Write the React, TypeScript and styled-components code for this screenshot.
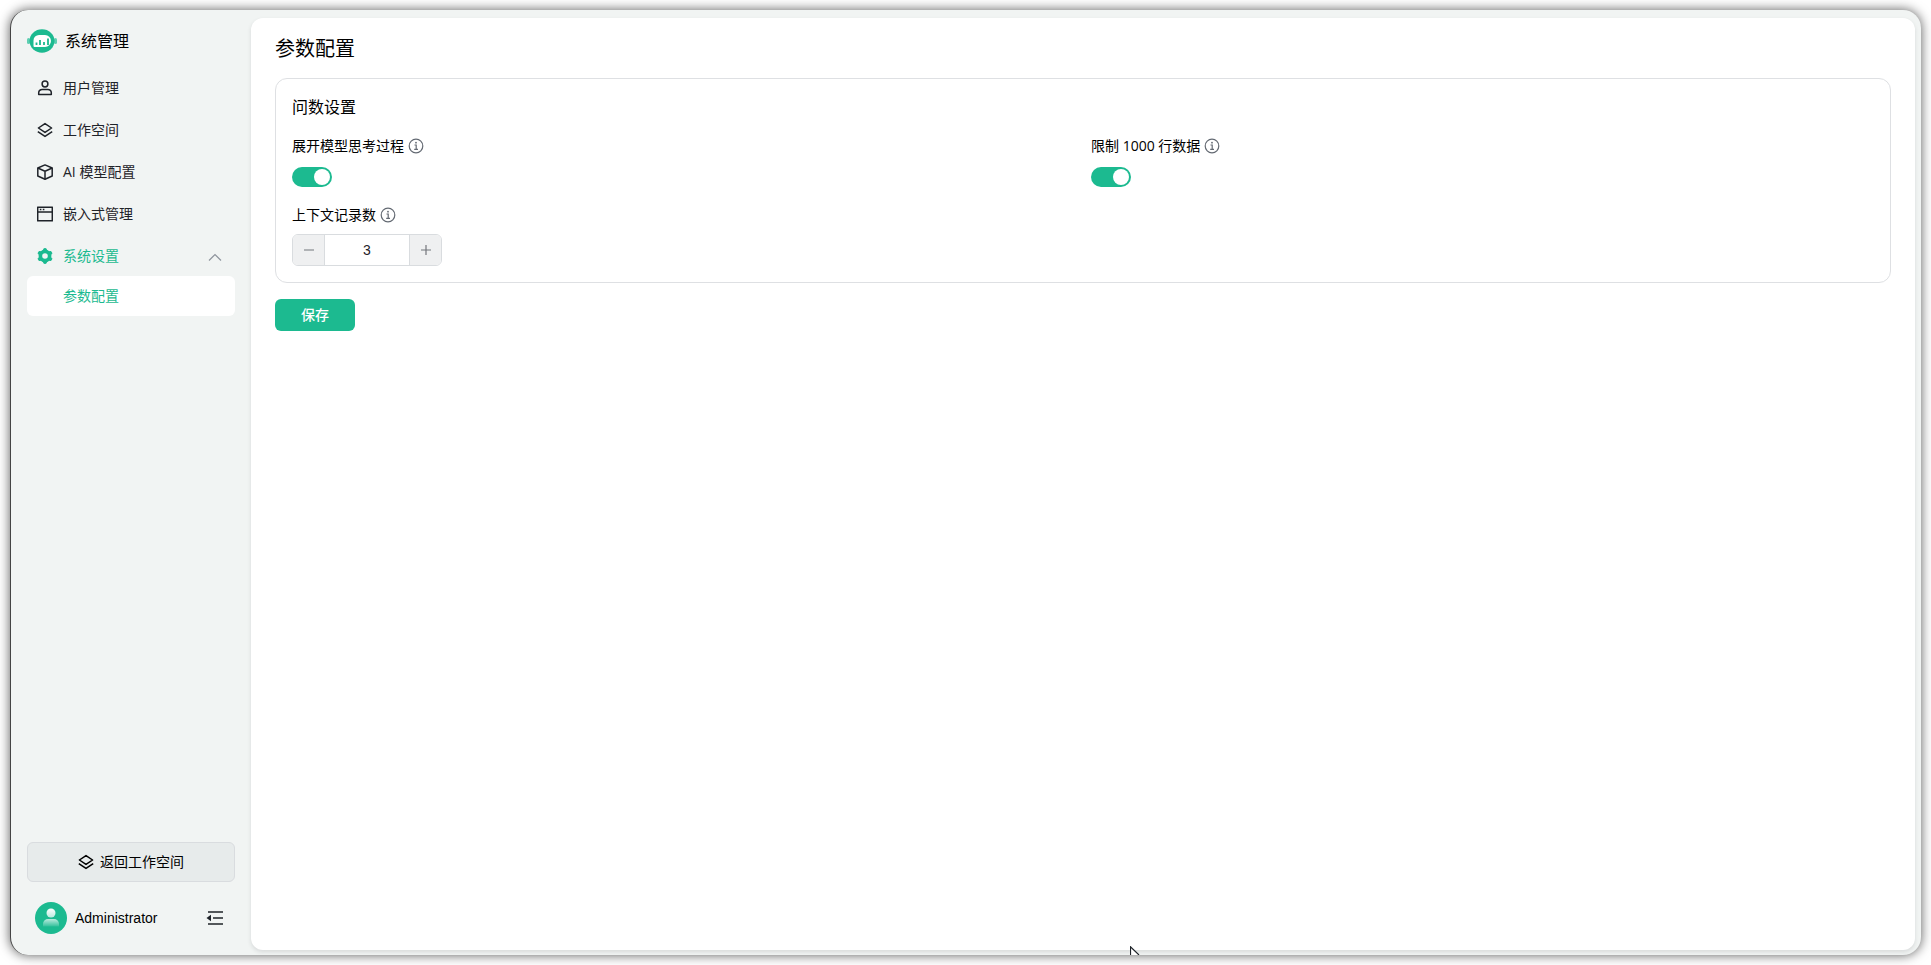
import React, { useState } from "react";
import styled, { createGlobalStyle } from "styled-components";

const green = "#1cba90";
const ink = "#1f2329";
const sans = '"Liberation Sans", "Noto Sans CJK SC", sans-serif';
const mixed = '"Open Sans", "Noto Sans CJK SC", sans-serif';

const GlobalStyle = createGlobalStyle`
  * { box-sizing: border-box; }
  body { margin: 0; background: #fff; font-family: ${mixed}; font-size: 14px; line-height: 22px; color: #000; }
  button, input { font: inherit; color: inherit; }
  h1, h2, ul { margin: 0; padding: 0; font-weight: 400; list-style: none; }
  svg { display: block; flex: none; }
`;

const Page = styled.div`
  min-height: 100vh;
  padding: 10px;
  display: flex;
`;

const Frame = styled.div`
  position: relative;
  flex: 1;
  display: flex;
  padding: 8px 6px 5px 0;
  border-left: 1px solid #444;
  border-radius: 18px;
  background: #f1f4f3;
  box-shadow: 0 0 12px rgba(0, 0, 0, 0.65);
`;

const Sidebar = styled.aside`
  width: 240px;
  flex: none;
  display: flex;
  flex-direction: column;
  padding: 8px 16px 12px;
`;

const Brand = styled.div`
  display: flex;
  align-items: center;
  gap: 8px;
  height: 30px;
  margin-bottom: 12px;
  font-size: 16px;
  line-height: 24px;
`;

const Menu = styled.ul`
  display: flex;
  flex-direction: column;
  gap: 2px;
`;

const MenuLink = styled.a<{ $active?: boolean }>`
  display: flex;
  align-items: center;
  gap: 10px;
  height: 40px;
  padding: 0 13px 0 10px;
  color: ${(p) => (p.$active ? green : ink)};
  text-decoration: none;
`;

const MenuText = styled.span`
  flex: 1;
`;

const SubLink = styled.a`
  display: flex;
  align-items: center;
  height: 40px;
  padding-left: 36px;
  border-radius: 6px;
  background: #fff;
  color: ${green};
  text-decoration: none;
`;

const SideFooter = styled.div`
  margin-top: auto;
  display: flex;
  flex-direction: column;
  gap: 16px;
`;

const BackButton = styled.button`
  display: flex;
  align-items: center;
  justify-content: center;
  gap: 6px;
  height: 40px;
  padding: 0;
  border: 1px solid #d9dcdf;
  border-radius: 6px;
  background: #e7ebeb;
`;

const UserRow = styled.div`
  display: flex;
  align-items: center;
  gap: 8px;
  height: 40px;
  padding: 0 9px 0 8px;
  font-family: ${sans};
`;

const UserName = styled.span`
  flex: 1;
`;

const IconButton = styled.button`
  display: flex;
  padding: 2px;
  border: 0;
  background: none;
  color: ${ink};
`;

const Main = styled.main`
  flex: 1;
  padding: 16px 24px;
  border-radius: 12px;
  background: #fff;
  box-shadow: 0 2px 4px rgba(31, 35, 41, 0.12);
`;

const PageTitle = styled.h1`
  font-size: 20px;
  line-height: 30px;
  margin-bottom: 14px;
`;

const Card = styled.section`
  padding: 16px;
  border: 1px solid #dee0e3;
  border-radius: 12px;
  margin-bottom: 16px;
`;

const CardTitle = styled.h2`
  font-size: 16px;
  line-height: 24px;
  margin-bottom: 16px;
`;

const Fields = styled.div`
  display: grid;
  grid-template-columns: 1fr 1fr;
  gap: 16px;
`;

const Field = styled.div`
  display: flex;
  flex-direction: column;
  align-items: flex-start;
  gap: 8px;
`;

const FieldHead = styled.div`
  display: flex;
  align-items: center;
  gap: 4px;
  height: 22px;
`;

const SwitchInput = styled.input`
  appearance: none;
  display: flex;
  align-items: center;
  width: 40px;
  height: 20px;
  margin: 2px 0 1px;
  padding: 0 2px;
  border-radius: 10px;
  background: #bbbfc4;
  &::before {
    content: "";
    width: 16px;
    height: 16px;
    border-radius: 50%;
    background: #fff;
  }
  &:checked {
    background: ${green};
    justify-content: flex-end;
  }
`;

const Stepper = styled.div`
  display: flex;
  width: 150px;
  height: 32px;
  border: 1px solid #d9dcdf;
  border-radius: 6px;
  overflow: hidden;
`;

const StepButton = styled.button`
  display: flex;
  align-items: center;
  justify-content: center;
  width: 31px;
  padding: 0;
  border: 0;
  background: #eff0f1;
  color: #73767c;
`;

const StepInput = styled.input`
  flex: 1;
  min-width: 0;
  padding: 0;
  border: solid #d9dcdf;
  border-width: 0 1px;
  background: #fff;
  color: ${ink};
  font-family: ${sans};
  text-align: center;
  outline: 0;
`;

const SaveButton = styled.button`
  width: 80px;
  height: 32px;
  padding: 0;
  border: 0;
  border-radius: 6px;
  background: ${green};
  color: #fff;
  font-weight: 500;
`;

const Pointer = styled.svg`
  position: absolute;
  left: 1119px;
  bottom: 0;
`;

const Logo = () => (
  <svg width="30" height="24" viewBox="0 0 30 24">
    <rect x="0" y="9" width="3" height="6" rx="1.5" fill="#5fcfb2" />
    <rect x="27" y="9" width="3" height="6" rx="1.5" fill="#5fcfb2" />
    <ellipse cx="15" cy="12" rx="12.5" ry="11.7" fill={green} />
    <path d="M12 6h6a6 6 0 0 1 0 12H7.500a1 1 0 0 1-1-1v-5.500A5.500 5.500 0 0 1 12 6z" fill="#fff" />
    <path d="M9.500 13.500V16M13 11V16M17 13V16M21 9.500V16" stroke={green} strokeWidth="1.800" />
  </svg>
);

const line = { fill: "none", stroke: "currentColor", strokeWidth: 1.5, strokeLinejoin: "round" as const };

const UserIcon = () => (
  <svg width="16" height="16" viewBox="0 0 16 16" {...line}>
    <circle cx="8" cy="4" r="2.9" />
    <path d="M1.7 14.6v-1.8a3.4 3.4 0 0 1 3.4-3.4h5.8a3.4 3.4 0 0 1 3.4 3.4v1.8z" />
  </svg>
);

const LayersIcon = () => (
  <svg width="16" height="16" viewBox="0 0 16 16" {...line}>
    <path d="M8 1.600 14.600 6 8 10.400 1.400 6z" />
    <path d="M.8 9.600 8 14.400l7.200-4.800" />
  </svg>
);

const CubeIcon = () => (
  <svg width="16" height="16" viewBox="0 0 16 16" {...line}>
    <path d="M8 .9 15.200 4v8L8 15.200.8 12V4z" />
    <path d="M.8 4 8 7.200 15.200 4M8 7.200v8" />
  </svg>
);

const WindowIcon = () => (
  <svg width="16" height="16" viewBox="0 0 16 16" {...line}>
    <path d="M.7 1.200h14.600v13.600H.7zM.7 6h14.600" />
    <path d="M2.800 3.600h1.600M5.800 3.600h1.600" />
  </svg>
);

const GearIcon = () => (
  <svg width="16" height="16" viewBox="0 0 16 16" fill="none" stroke="currentColor">
    <circle cx="8" cy="8" r="4.600" strokeWidth="3.600" />
    {[0, 60, 120, 180, 240, 300].map((angle) => (
      <path
        key={angle}
        d="M6.300 3 6.900.7h2.200L9.700 3z"
        fill="currentColor"
        strokeWidth="1"
        strokeLinejoin="round"
        transform={`rotate(${angle} 8 8)`}
      />
    ))}
  </svg>
);

const ChevronUp = () => (
  <svg width="14" height="14" viewBox="0 0 14 14" fill="none" stroke="#8f959e" strokeWidth="1.200">
    <path d="M1 11.500 7 5.500l6 6" />
  </svg>
);

const CollapseIcon = () => (
  <svg width="18" height="16" viewBox="0 0 18 16">
    <path d="M2 2h15M7 8h10M2 14h15" stroke="currentColor" strokeWidth="1.700" />
    <path d="M.5 8 5 4.800v6.400z" fill="currentColor" />
  </svg>
);

const Avatar = () => (
  <svg width="32" height="32" viewBox="0 0 32 32">
    <defs>
      <linearGradient id="fade" x1="0" y1="0" x2="0" y2="1">
        <stop offset="0" stopColor="#fff" stopOpacity=".7" />
        <stop offset="1" stopColor="#fff" stopOpacity=".1" />
      </linearGradient>
      <linearGradient id="head" x1="0" y1="0" x2="0" y2="1">
        <stop offset="0" stopColor="#fff" />
        <stop offset="1" stopColor="#fff" stopOpacity=".7" />
      </linearGradient>
    </defs>
    <circle cx="16" cy="16" r="16" fill={green} />
    <circle cx="16" cy="11" r="4.500" fill="url(#head)" />
    <path d="M8 24.500V22a5 5 0 0 1 5-5h6a5 5 0 0 1 5 5v2.500z" fill="url(#fade)" />
  </svg>
);

const InfoIcon = () => (
  <svg width="16" height="16" viewBox="0 0 16 16" fill="none" stroke="#646a73" strokeWidth="1.200">
    <circle cx="8" cy="8" r="6.800" />
    <path d="M6.500 7h1.700v4.300M6.200 11.300h3.800" />
    <circle cx="8" cy="4.700" r=".9" fill="#646a73" stroke="none" />
  </svg>
);

const StepIcon = ({ plus }: { plus?: boolean }) => (
  <svg width="12" height="12" viewBox="0 0 12 12" fill="none" stroke="currentColor" strokeWidth="1.200">
    <path d={plus ? "M1 6h10M6 1v10" : "M1 6h10"} />
  </svg>
);

const items = [
  { text: "用户管理", icon: <UserIcon /> },
  { text: "工作空间", icon: <LayersIcon /> },
  { text: "AI 模型配置", icon: <CubeIcon /> },
  { text: "嵌入式管理", icon: <WindowIcon /> },
];

const SwitchField = ({ id, label }: { id: string; label: string }) => (
  <Field>
    <FieldHead>
      <label htmlFor={id}>{label}</label>
      <InfoIcon />
    </FieldHead>
    <SwitchInput id={id} type="checkbox" role="switch" defaultChecked />
  </Field>
);

export default function App() {
  const [count, setCount] = useState(3);
  return (
    <Page>
      <GlobalStyle />
      <Frame>
        <Sidebar>
          <Brand>
            <Logo />
            <span>系统管理</span>
          </Brand>
          <nav>
            <Menu>
              {items.map((item) => (
                <li key={item.text}>
                  <MenuLink href="#">
                    {item.icon}
                    <MenuText>{item.text}</MenuText>
                  </MenuLink>
                </li>
              ))}
              <li>
                <MenuLink href="#" $active>
                  <GearIcon />
                  <MenuText>系统设置</MenuText>
                  <ChevronUp />
                </MenuLink>
                <SubLink href="#">参数配置</SubLink>
              </li>
            </Menu>
          </nav>
          <SideFooter>
            <BackButton type="button">
              <LayersIcon />
              返回工作空间
            </BackButton>
            <UserRow>
              <Avatar />
              <UserName>Administrator</UserName>
              <IconButton type="button" aria-label="收起">
                <CollapseIcon />
              </IconButton>
            </UserRow>
          </SideFooter>
        </Sidebar>
        <Main>
          <PageTitle>参数配置</PageTitle>
          <Card>
            <CardTitle>问数设置</CardTitle>
            <Fields>
              <SwitchField id="thinking" label="展开模型思考过程" />
              <SwitchField id="limit" label="限制 1000 行数据" />
              <Field>
                <FieldHead>
                  <label htmlFor="records">上下文记录数</label>
                  <InfoIcon />
                </FieldHead>
                <Stepper>
                  <StepButton type="button" aria-label="减少" onClick={() => setCount(count - 1)}>
                    <StepIcon />
                  </StepButton>
                  <StepInput
                    id="records"
                    inputMode="numeric"
                    value={count}
                    onChange={(e) => setCount(Number(e.target.value) || 0)}
                  />
                  <StepButton type="button" aria-label="增加" onClick={() => setCount(count + 1)}>
                    <StepIcon plus />
                  </StepButton>
                </Stepper>
              </Field>
            </Fields>
          </Card>
          <SaveButton type="button">保存</SaveButton>
        </Main>
        <Pointer width="10" height="9" viewBox="0 0 10 9" aria-hidden="true">
          <path d="M.5 9V.8L9 9" fill="#fff" stroke="#1f2329" strokeWidth="1.200" />
        </Pointer>
      </Frame>
    </Page>
  );
}
